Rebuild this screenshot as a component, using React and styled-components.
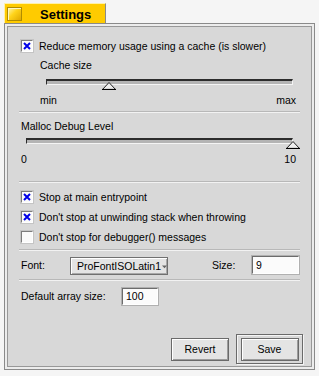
import React from 'react'
import styled, { createGlobalStyle } from 'styled-components'

const Global = createGlobalStyle`
  html, body {
    margin: 0;
    padding: 0;
    background: #f5f5f5;
  }
  body {
    font-family: "Liberation Sans", Arial, sans-serif;
    font-size: 10.5px;
    color: #000;
  }
`

const Page = styled.div`
  width: 319px;
  height: 376px;
  padding-top: 3px;
  box-sizing: border-box;
`

const TabBar = styled.div`
  display: flex;
  padding-left: 4px;
  height: 20px;
`

const Tab = styled.div`
  width: 102px;
  height: 20px;
  box-sizing: border-box;
  background: #ffcb00;
  border-top: 1px solid #fff1a8;
  border-left: 1px solid #fff1a8;
  border-right: 1px solid #8a8a8a;
  display: flex;
  align-items: center;
  gap: 18px;
  padding-left: 2px;
`

const TabIcon = styled.div`
  width: 15px;
  height: 14px;
  box-sizing: border-box;
  border: 1px solid #b08c00;
  background: linear-gradient(135deg, #fff6b0 0%, #ffd41a 45%, #e0a800 100%);
  box-shadow: inset 1px 1px 0 #fff8c0;
`

const TabTitle = styled.span`
  font-weight: bold;
  font-size: 13px;
  padding-top: 1px;
`

const Window = styled.div`
  margin: 0 4px;
  height: 347px;
  box-sizing: border-box;
  border: 1px solid #8a8a8a;
  background: #ececec;
  padding: 2px;
`

const Panel = styled.div`
  height: 100%;
  box-sizing: border-box;
  background: #d8d8d8;
  border: 1px solid #989898;
  display: flex;
  flex-direction: column;
`

const Section = styled.div`
  display: flex;
  flex-direction: column;
  padding: ${p => p.$pad || '0'};
`

const Separator = styled.div`
  margin: 0 11px;
  border-top: 1px solid #b8b8b8;
  border-bottom: 1px solid #f2f2f2;
`

const CheckRow = styled.label`
  display: flex;
  align-items: center;
  gap: 6px;
  height: 20px;
  padding-left: 13px;
  white-space: nowrap;
`

const Box = styled.span`
  width: 12px;
  height: 12px;
  box-sizing: border-box;
  background: #fafafa;
  border-top: 1px solid #7c7c7c;
  border-left: 1px solid #7c7c7c;
  border-bottom: 1px solid #ffffff;
  border-right: 1px solid #ffffff;
  box-shadow: 0 0 0 1px #c4c4c4;
  display: flex;
  align-items: center;
  justify-content: center;
`

const Checkbox = ({ checked, children }) => (
  <CheckRow>
    <Box>
      {checked && (
        <svg width="8" height="8" viewBox="0 0 8 8">
          <path d="M1 1 L7 7 M7 1 L1 7" stroke="#0000e8" strokeWidth="2" />
        </svg>
      )}
    </Box>
    <span>{children}</span>
  </CheckRow>
)

const Label = styled.div`
  height: ${p => p.$h || 16}px;
  display: flex;
  align-items: center;
  padding-left: ${p => p.$indent || 0}px;
`

const SliderWrap = styled.div`
  position: relative;
  height: ${p => p.$h}px;
  margin-left: ${p => p.$left}px;
  width: ${p => p.$width}px;
`

const Track = styled.div`
  margin-top: ${p => p.$top}px;
  height: 6px;
  box-sizing: border-box;
  background: #b4b4b4;
  border-top: 2px solid #2c2c2c;
  border-left: 1px solid #2c2c2c;
  border-right: 1px solid #f4f4f4;
  border-bottom: 1px solid #f4f4f4;
`

const Thumb = styled.svg`
  position: absolute;
  top: ${p => p.$top}px;
  margin-left: -7px;
`

const Slider = ({ value, left, width, height, trackTop }) => (
  <SliderWrap $left={left} $width={width} $h={height}>
    <Track $top={trackTop} />
    <Thumb $top={trackTop + 3} width="14" height="8" viewBox="0 0 14 8" style={{ left: `${value * 100}%` }}>
      <path d="M7 0.5 L13.5 7.5 L0.5 7.5 Z" fill="#eeeeee" stroke="#222" strokeWidth="1" />
      <path d="M0 7.5 L14 7.5" stroke="#000" strokeWidth="1.2" />
    </Thumb>
  </SliderWrap>
)

const Ends = styled.div`
  display: flex;
  justify-content: space-between;
  height: 14px;
  align-items: center;
  margin-left: ${p => p.$left}px;
  width: ${p => p.$width}px;
`

const FieldRow = styled.div`
  display: flex;
  align-items: center;
  height: ${p => p.$h}px;
  padding-left: 13px;
`

const FieldLabel = styled.span`
  width: ${p => p.$w}px;
  margin-left: ${p => p.$gap || 0}px;
`

const Dropdown = styled.div`
  width: 98px;
  height: 18px;
  box-sizing: border-box;
  background: #e4e4e4;
  border: 1px solid #707070;
  box-shadow: inset 1px 1px 0 #ffffff, inset -1px -1px 0 #a8a8a8;
  display: flex;
  align-items: center;
  padding-left: 6px;
  gap: 1px;
  margin-top: 2px;
  white-space: nowrap;
`

const Input = styled.div`
  width: ${p => p.$w}px;
  height: ${p => p.$h}px;
  box-sizing: border-box;
  background: #fbfbfb;
  border-top: 1px solid #6c6c6c;
  border-left: 1px solid #6c6c6c;
  border-right: 1px solid #ffffff;
  border-bottom: 1px solid #ffffff;
  box-shadow: 0 0 0 1px #b0b0b0;
  padding-left: 3px;
  display: flex;
  align-items: center;
`

const Spacer = styled.div`
  flex: 1;
`

const ButtonBar = styled.div`
  display: flex;
  justify-content: flex-end;
  align-items: center;
  gap: 7px;
  padding: 0 8px 2px 0;
`

const Button = styled.div`
  width: 58px;
  height: 23px;
  box-sizing: border-box;
  background: #e4e4e4;
  border: 1px solid #6a6a6a;
  box-shadow: inset 1px 1px 0 #ffffff, inset -1px -1px 0 #9c9c9c;
  display: flex;
  align-items: center;
  justify-content: center;
`

const DefaultRing = styled.div`
  width: 67px;
  height: 30px;
  box-sizing: border-box;
  border: 1px solid #6a6a6a;
  box-shadow: inset 1px 1px 0 #f4f4f4, 1px 1px 0 #f4f4f4;
  display: flex;
  align-items: center;
  justify-content: center;
`

export default function App() {
  return (
    <Page>
      <Global />
      <TabBar>
        <Tab>
          <TabIcon />
          <TabTitle>Settings</TabTitle>
        </Tab>
      </TabBar>
      <Window>
        <Panel>
          <Section $pad="9px 0 4px 0">
            <Checkbox checked>Reduce memory usage using a cache (is slower)</Checkbox>
            <Label $indent={32} $h={18}>Cache size</Label>
            <Slider value={0.255} left={38} width={247} height={19} trackTop={5} />
            <Ends $left={32} $width={256}>
              <span>min</span>
              <span>max</span>
            </Ends>
          </Section>
          <Separator />
          <Section $pad="5px 0 15px 0">
            <Label $indent={13}>Malloc Debug Level</Label>
            <Slider value={1} left={18} width={267} height={18} trackTop={4} />
            <Ends $left={13} $width={275}>
              <span>0</span>
              <span>10</span>
            </Ends>
          </Section>
          <Separator />
          <Section $pad="4px 0 2px 0">
            <Checkbox checked>Stop at main entrypoint</Checkbox>
            <Checkbox checked>Don't stop at unwinding stack when throwing</Checkbox>
            <Checkbox>Don't stop for debugger() messages</Checkbox>
          </Section>
          <Separator />
          <FieldRow $h={28}>
            <FieldLabel $w={49}>Font:</FieldLabel>
            <Dropdown>
              <span>ProFontISOLatin1</span>
              <svg width="7" height="5" viewBox="0 0 7 5">
                <path d="M0 1 L7 1 L3.5 5 Z" fill="#666" />
              </svg>
            </Dropdown>
            <FieldLabel $w={40} $gap={44}>Size:</FieldLabel>
            <Input $w={47} $h={18}>9</Input>
          </FieldRow>
          <Separator />
          <FieldRow $h={30}>
            <FieldLabel $w={101}>Default array size:</FieldLabel>
            <Input $w={36} $h={17}>100</Input>
          </FieldRow>
          <Spacer />
          <ButtonBar>
            <Button>Revert</Button>
            <DefaultRing>
              <Button>Save</Button>
            </DefaultRing>
          </ButtonBar>
        </Panel>
      </Window>
    </Page>
  )
}
